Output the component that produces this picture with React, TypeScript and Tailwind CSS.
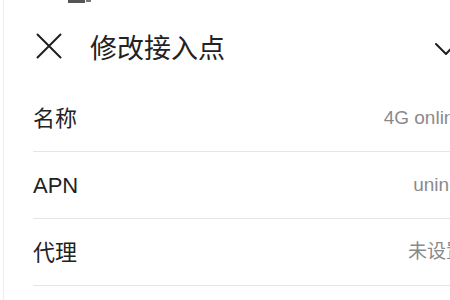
const rows = [
  { label: '名称', value: '4G online' },
  { label: 'APN', value: 'uninet' },
  { label: '代理', value: '未设置' },
]

function CloseIcon() {
  return (
    <svg width="26" height="26" viewBox="0 0 26 26" fill="none" stroke="#1f1f1f" strokeWidth="2" strokeLinecap="round">
      <path d="M1.5 1.5 L24.5 24.5 M24.5 1.5 L1.5 24.5" />
    </svg>
  )
}

function CheckIcon() {
  return (
    <svg width="32" height="24" viewBox="0 0 32 24" fill="none" stroke="#1f1f1f" strokeWidth="2" strokeLinecap="round" strokeLinejoin="round">
      <path d="M3 10 L13 20 L30 2" />
    </svg>
  )
}

export default function App() {
  return (
    <div className="w-[450px] h-[300px] overflow-hidden bg-white" style={{ fontFamily: '"Liberation Sans", "Noto Sans CJK SC", sans-serif' }}>
      <div className="w-[480px] h-full ml-[3px] border-l border-[#ededed]">
        {/* cut-off status bar */}
        <div className="h-[3px] flex items-start">
          <div className="ml-[64px] w-[17px] h-[3px] bg-[#555]" />
          <div className="ml-[1px] w-[5px] h-[2px] bg-[#777]" />
        </div>

        <header className="h-[83px] flex items-center pt-[10px] pl-[32px] pr-[18px]">
          <div className="-mt-[8px]"><CloseIcon /></div>
          <h1 className="ml-[28px] text-[27px] leading-none text-[#222]">修改接入点</h1>
          <div className="ml-auto -mt-[7px]"><CheckIcon /></div>
        </header>

        {rows.map((r, i) => (
          <div
            key={r.label}
            className={`ml-[29px] flex items-center justify-between pr-[18px] border-b border-[#e5e5e5] ${i === 0 ? 'h-[66px]' : 'h-[67px]'}`}
          >
            <span className="text-[22px] text-[#222]">{r.label}</span>
            <span className="text-[19px] text-[#8a8a8a]">{r.value}</span>
          </div>
        ))}
      </div>
    </div>
  )
}
